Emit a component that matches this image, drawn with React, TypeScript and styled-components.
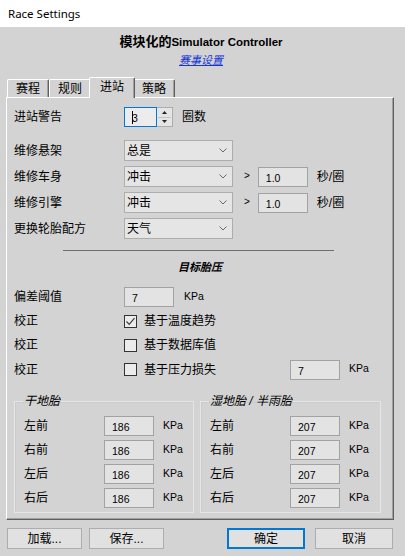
import React from "react";
import styled, { createGlobalStyle } from "styled-components";

const GlobalStyle = createGlobalStyle`
  html, body { margin: 0; padding: 0; }
  body {
    width: 405px; height: 556px; overflow: hidden; background: #d3d3d3;
    font-family: "Liberation Sans", "Noto Sans CJK SC", sans-serif;
    font-size: 12px; color: #000;
  }
  * { box-sizing: border-box; }
`;

const Window = styled.div`
  width: 405px; height: 556px; display: flex; flex-direction: column; background: #d3d3d3;
`;
const TitleBar = styled.div`
  height: 27px; flex: none; background: #fff; display: flex; align-items: center; padding-left: 8px;
  font-family: "Noto Sans", "Open Sans", sans-serif; font-size: 11.5px; color: #000;
`;
const Body = styled.div`
  flex: 1; display: flex; flex-direction: column; padding: 7px 11px 0 6px;
`;
const Header = styled.div`
  display: flex; flex-direction: column; align-items: center; padding-left: 2px;
`;
const AppTitle = styled.div`
  font-weight: bold; font-size: 13px; line-height: 16px; white-space: nowrap;
`;
const TitleLatin = styled.span`
  font-size: 11.5px;
`;
const Link = styled.a`
  margin-top: 3px; font-size: 11px; line-height: 14px; font-style: italic; color: #1434d8;
  text-decoration: underline;
`;
const TabStrip = styled.div`
  margin-top: 10px; height: 20px; display: flex; align-items: flex-end; padding-left: 1px;
`;
const Tab = styled.div<{ $active?: boolean }>`
  height: ${(p) => (p.$active ? 21 : 18)}px;
  width: ${(p) => (p.$active ? 46 : 42)}px;
  margin: 0 ${(p) => (p.$active ? -2 : 0)}px ${(p) => (p.$active ? -1 : 0)}px;
  border-top: 1px solid #fff; border-left: 1px solid #fff; border-right: 1px solid #5f5f5f;
  box-shadow: inset -1px 0 0 #a0a0a0;
  border-radius: 2px 2px 0 0;
  background: #d3d3d3;
  position: relative; z-index: ${(p) => (p.$active ? 2 : 0)};
  display: flex; align-items: center; justify-content: center;
  padding-bottom: ${(p) => (p.$active ? 3 : 0)}px;
  font-size: 12px; line-height: 14px;
`;
const Panel = styled.div`
  height: 423px; flex: none;
  border-top: 1px solid #fff; border-left: 1px solid #fff;
  border-right: 1px solid #5f5f5f; border-bottom: 1px solid #5f5f5f;
  box-shadow: inset -1px -1px 0 #a0a0a0;
  padding: 9px 7px 0 7px;
  display: flex; flex-direction: column;
`;
const Row = styled.div<{ $h?: number; $mt?: number }>`
  display: flex; align-items: center; flex: none;
  height: ${(p) => p.$h ?? 21}px; margin-top: ${(p) => p.$mt ?? 0}px;
`;
const Label = styled.div<{ $w?: number }>`
  width: ${(p) => p.$w ?? 110}px; flex: none; font-size: 12px; line-height: 14px; white-space: nowrap;
`;
const Edit = styled.div<{ $w?: number; $focus?: boolean }>`
  width: ${(p) => p.$w ?? 50}px; height: 20px; flex: none;
  border: 1px solid ${(p) => (p.$focus ? "#0078d7" : "#a2a2a2")};
  background: ${(p) => (p.$focus ? "#ececec" : "#e3e3e3")};
  display: flex; align-items: center; padding: 2px 0 0 7px;
  font-size: 10.5px; line-height: 12px;
`;
const Caret = styled.span`
  display: inline-block; width: 1px; height: 13px; background: #000; margin: -2px -1px 0 0;
`;
const UpDown = styled.div`
  width: 16px; height: 20px; flex: none; display: flex; flex-direction: column;
  border: 1px solid #adadad; border-left: none; background: #e5e5e5;
`;
const UpDownHalf = styled.div<{ $top?: boolean }>`
  flex: 1; display: flex; align-items: center; justify-content: center;
  border-bottom: ${(p) => (p.$top ? "1px solid #c4c4c4" : "none")};
  margin: 0 1px;
`;
const Unit = styled.span<{ $small?: boolean; $ml?: number }>`
  margin-left: ${(p) => p.$ml ?? 9}px;
  font-size: ${(p) => (p.$small ? 10.5 : 12)}px; line-height: 14px; white-space: nowrap;
  ${(p) => (p.$small ? "margin-top: -3px;" : "")}
`;
const Select = styled.div`
  width: 109px; height: 21px; flex: none;
  border: 1px solid #adadad; background: #e5e5e5;
  display: flex; align-items: center; justify-content: space-between;
  padding: 0 5px 0 2px; font-size: 12px; line-height: 14px;
`;
const Gt = styled.span`
  margin: 0 8px 0 11px; font-size: 10px; line-height: 12px; margin-top: -2px;
`;
const Separator = styled.div`
  height: 1px; width: 271px; margin: 11px 0 0 49px; background: #6e6e6e; flex: none;
`;
const SectionTitle = styled.div`
  margin-top: 9px; text-align: center; font-weight: bold; font-style: italic;
  font-size: 11px; line-height: 14px; flex: none;
`;
const CheckWrap = styled.div`
  width: 166px; flex: none; display: flex; align-items: center; gap: 7px;
  font-size: 12px; line-height: 14px;
`;
const Box = styled.div`
  width: 13px; height: 13px; flex: none; border: 1px solid #333; background: #ececec;
  display: flex; align-items: center; justify-content: center;
`;
const GroupRow = styled.div`
  display: flex; gap: 6px; margin-top: 14px; flex: none;
`;
const Group = styled.fieldset<{ $w: number }>`
  margin: 0; min-width: 0; width: ${(p) => p.$w}px;
  padding: 8px 0 4px 9px;
  border: 1px solid #e6e6e6;
  box-shadow: inset 1px 1px 0 #cbcbcb;
`;
const GroupTitle = styled.legend`
  padding: 0 1px; margin-left: -1px; font-style: italic; font-size: 12px; line-height: 14px;
`;
const GroupItem = styled.div<{ $first?: boolean }>`
  display: flex; align-items: center; height: 20px; margin-top: ${(p) => (p.$first ? 0 : 4)}px;
`;
const ButtonBar = styled.div`
  display: flex; margin-top: 8px; padding-left: 1px; padding-right: 0;
`;
const Button = styled.button<{ $w?: number; $default?: boolean; $ml?: number }>`
  width: ${(p) => p.$w ?? 75}px; height: 21px; margin-left: ${(p) => p.$ml ?? 0}px;
  background: #e1e1e1;
  border: ${(p) => (p.$default ? "2px solid #0078d7" : "1px solid #adadad")};
  font-family: "Liberation Sans", "Noto Sans CJK SC", sans-serif;
  font-size: 12px; line-height: 14px; color: #000; padding: 0;
  display: flex; align-items: center; justify-content: center;
`;

const Chevron = () => (
  <svg width="8" height="5" viewBox="0 0 8 5">
    <polyline points="0.5,0.5 4,4 7.5,0.5" fill="none" stroke="#6a6a6a" strokeWidth="1" />
  </svg>
);

const Tri = ({ up }: { up?: boolean }) => (
  <svg width="5" height="3" viewBox="0 0 5 3">
    <polygon points={up ? "0,3 5,3 2.5,0" : "0,0 5,0 2.5,3"} fill="#222" />
  </svg>
);

const Check = () => (
  <svg width="11" height="11" viewBox="0 0 11 11">
    <polyline points="1.5,5.5 4.2,8.3 9.5,2.2" fill="none" stroke="#3c3c3c" strokeWidth="1.2" />
  </svg>
);

const tyres = ["左前", "右前", "左后", "右后"];

const TyreGroup = ({ title, value, w }: { title: string; value: string; w: number }) => (
  <Group $w={w}>
    <GroupTitle>{title}</GroupTitle>
    {tyres.map((t, i) => (
      <GroupItem key={t} $first={i === 0}>
        <Label $w={80}>{t}</Label>
        <Edit $w={50}>{value}</Edit>
        <Unit $small>KPa</Unit>
      </GroupItem>
    ))}
  </Group>
);

export default function App() {
  return (
    <Window>
      <GlobalStyle />
      <TitleBar>Race Settings</TitleBar>
      <Body>
        <Header>
          <AppTitle>
            模块化的<TitleLatin>Simulator Controller</TitleLatin>
          </AppTitle>
          <Link href="#">赛事设置</Link>
        </Header>
        <TabStrip>
          <Tab>赛程</Tab>
          <Tab>规则</Tab>
          <Tab $active>进站</Tab>
          <Tab>策略</Tab>
        </TabStrip>
        <Panel>
          <Row $h={20}>
            <Label>进站警告</Label>
            <Edit $w={33} $focus>
              <Caret />3
            </Edit>
            <UpDown>
              <UpDownHalf $top>
                <Tri up />
              </UpDownHalf>
              <UpDownHalf>
                <Tri />
              </UpDownHalf>
            </UpDown>
            <Unit>圈数</Unit>
          </Row>
          <Row $mt={13}>
            <Label>维修悬架</Label>
            <Select>
              总是
              <Chevron />
            </Select>
          </Row>
          <Row $mt={5}>
            <Label>维修车身</Label>
            <Select>
              冲击
              <Chevron />
            </Select>
            <Gt>&gt;</Gt>
            <Edit $w={50}>1.0</Edit>
            <Unit>秒/圈</Unit>
          </Row>
          <Row $mt={5}>
            <Label>维修引擎</Label>
            <Select>
              冲击
              <Chevron />
            </Select>
            <Gt>&gt;</Gt>
            <Edit $w={50}>1.0</Edit>
            <Unit>秒/圈</Unit>
          </Row>
          <Row $mt={5}>
            <Label>更换轮胎配方</Label>
            <Select>
              天气
              <Chevron />
            </Select>
          </Row>
          <Separator />
          <SectionTitle>目标胎压</SectionTitle>
          <Row $h={20} $mt={13}>
            <Label>偏差阈值</Label>
            <Edit $w={50}>7</Edit>
            <Unit $small $ml={10}>KPa</Unit>
          </Row>
          <Row $h={20} $mt={4}>
            <Label>校正</Label>
            <CheckWrap>
              <Box>
                <Check />
              </Box>
              基于温度趋势
            </CheckWrap>
          </Row>
          <Row $h={20} $mt={4}>
            <Label>校正</Label>
            <CheckWrap>
              <Box />
              基于数据库值
            </CheckWrap>
          </Row>
          <Row $h={21} $mt={4}>
            <Label>校正</Label>
            <CheckWrap>
              <Box />
              基于压力损失
            </CheckWrap>
            <Edit $w={50}>7</Edit>
            <Unit $small>KPa</Unit>
          </Row>
          <GroupRow>
            <TyreGroup title="干地胎" value="186" w={180} />
            <TyreGroup title="湿地胎 / 半雨胎" value="207" w={181} />
          </GroupRow>
        </Panel>
        <ButtonBar>
          <Button>加载...</Button>
          <Button $ml={7}>保存...</Button>
          <Button $w={78} $ml={63} $default>确定</Button>
          <Button $w={78} $ml={10}>取消</Button>
        </ButtonBar>
      </Body>
    </Window>
  );
}
